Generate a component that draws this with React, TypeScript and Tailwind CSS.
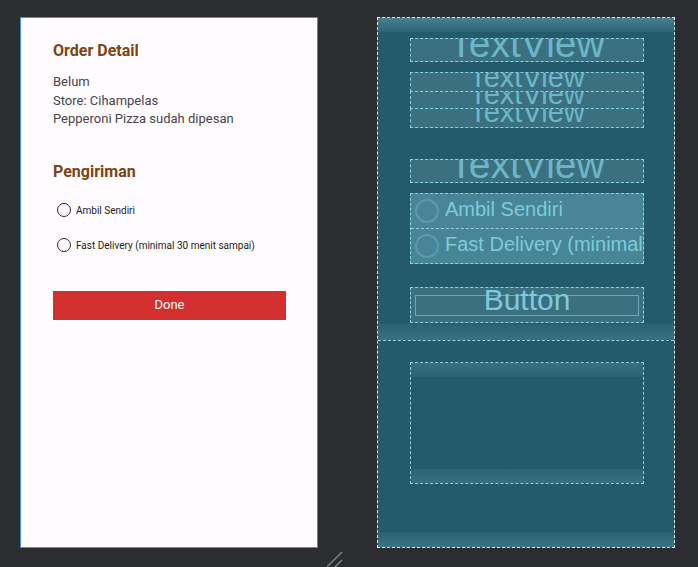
import React from 'react';

const font = { fontFamily: 'Roboto, "Liberation Sans", sans-serif' };
const bp = { fontFamily: '"Liberation Sans", Arial, sans-serif' };

function RadioRow({ label }: { label: string }) {
  return (
    <div className="flex h-[35px] items-center pl-[4px]">
      <span className="h-[14px] w-[14px] rounded-full border-[1.5px] border-[#2b2930]" />
      <span className="ml-[5px] text-[10px] text-[#1d1b20]">{label}</span>
    </div>
  );
}

function DesignPanel() {
  return (
    <div className="relative h-[531px] w-[298px] border border-[#3d8ff0] bg-[#fffbfe]" style={font}>
      <div className="w-[233px] ml-[32px] mt-[21px]">
        <div className="flex h-[23px] items-center text-[16px] font-bold text-[#7b4413]">Order Detail</div>
        <div className="mt-[11px] text-[13px] leading-[18.5px] text-[#49454f]">
          <div>Belum</div>
          <div>Store: Cihampelas</div>
          <div>Pepperoni Pizza sudah dipesan</div>
        </div>
        <div className="mt-[32px] flex h-[23px] items-center text-[16px] font-bold text-[#7b4413]">Pengiriman</div>
        <div className="mt-[9px]">
          <RadioRow label="Ambil Sendiri" />
          <RadioRow label="Fast Delivery (minimal 30 menit sampai)" />
        </div>
        <div className="mt-[28px] flex h-[29px] items-center justify-center bg-[#d32f2f] text-[13px] font-normal text-white">
          Done
        </div>
      </div>
    </div>
  );
}

function BpText({ h, size, mt, mb }: { h: string; size: string; mt: string; mb?: string }) {
  return (
    <div className={`${h} ${mb ?? ''} overflow-hidden border border-dashed border-[#86d3e4] bg-[#3b7080]`}>
      <div className={`${size} ${mt} text-center text-[#6cb6c9]`} style={bp}>TextView</div>
    </div>
  );
}

function BpRadio({ label }: { label: string }) {
  return (
    <div className="flex h-[34px] items-center overflow-hidden whitespace-nowrap pl-[4px]">
      <span className="h-[24px] w-[24px] shrink-0 rounded-full border-[2px] border-[#5c9aac]" />
      <span className="-mt-[5px] ml-[6px] text-[20px] text-[#7ecadc]" style={bp}>{label}</span>
    </div>
  );
}

function BlueprintPanel() {
  return (
    <div className="flex h-[531px] w-[298px] flex-col border border-dashed border-[#e6eef0] bg-[#245b6c]">
      <div className="relative flex h-[323px] flex-col border-b border-dashed border-[#8fd6e6]">
        <div className="absolute inset-x-0 top-0 h-[14px] bg-gradient-to-b from-[#45808f] to-[#2d6576]" />
        <div className="absolute inset-x-0 bottom-0 h-[16px] bg-gradient-to-t from-[#3a7180] to-[#2a6273]" />
        <div className="relative ml-[32px] mt-[20px] w-[234px]">
          <BpText h="h-[24px]" size="text-[39px] leading-[39px]" mt="-mt-[15px]" mb="mb-[10px]" />
          <BpText h="h-[20px]" size="text-[29px] leading-[29px]" mt="-mt-[10px]" />
          <BpText h="h-[18px] -mt-px" size="text-[29px] leading-[29px]" mt="-mt-[12px]" />
          <BpText h="h-[20px] -mt-px" size="text-[29px] leading-[29px]" mt="-mt-[11px]" mb="mb-[31px]" />
          <BpText h="h-[24px]" size="text-[39px] leading-[39px]" mt="-mt-[15px]" mb="mb-[10px]" />
          <div className="border border-dashed border-[#86d3e4] bg-[#488596]">
            <BpRadio label="Ambil Sendiri" />
            <div className="border-t border-dashed border-[#86d3e4]">
              <BpRadio label="Fast Delivery (minimal 30 menit sampai)" />
            </div>
          </div>
          <div className="mt-[23px] flex h-[36px] items-center border border-dashed border-[#86d3e4] bg-[#3b7080] px-[4px]">
            <div className="relative flex h-[21px] w-full items-center justify-center border border-[#6aa8b8]">
              <span className="-mt-[11px] text-[30px] leading-none text-[#7ecadc]" style={bp}>Button</span>
            </div>
          </div>
        </div>
      </div>
      <div className="relative flex-1">
        <div className="absolute inset-x-0 bottom-0 h-[15px] bg-gradient-to-t from-[#3d7483] to-[#2a6273]" />
        <div className="ml-[32px] mt-[21px] flex h-[122px] w-[234px] flex-col justify-between border border-dashed border-[#86d3e4]">
          <div className="h-[14px] bg-gradient-to-b from-[#396f7f] to-[#2b6475]" />
          <div className="h-[14px] bg-gradient-to-t from-[#396f7f] to-[#2b6475]" />
        </div>
      </div>
    </div>
  );
}

export default function App() {
  return (
    <div className="relative h-[567px] w-[698px] overflow-hidden bg-[#2b2d30]">
      <div className="flex gap-[59px] pl-[20px] pt-[17px]">
        <DesignPanel />
        <BlueprintPanel />
      </div>
      <svg className="absolute left-[322px] top-[548px]" width="24" height="20" viewBox="0 0 24 20">
        <line x1="20" y1="4" x2="5" y2="19" stroke="#8a8c90" strokeWidth="1.2" />
        <line x1="20" y1="12" x2="13" y2="19" stroke="#8a8c90" strokeWidth="1.2" />
      </svg>
    </div>
  );
}
